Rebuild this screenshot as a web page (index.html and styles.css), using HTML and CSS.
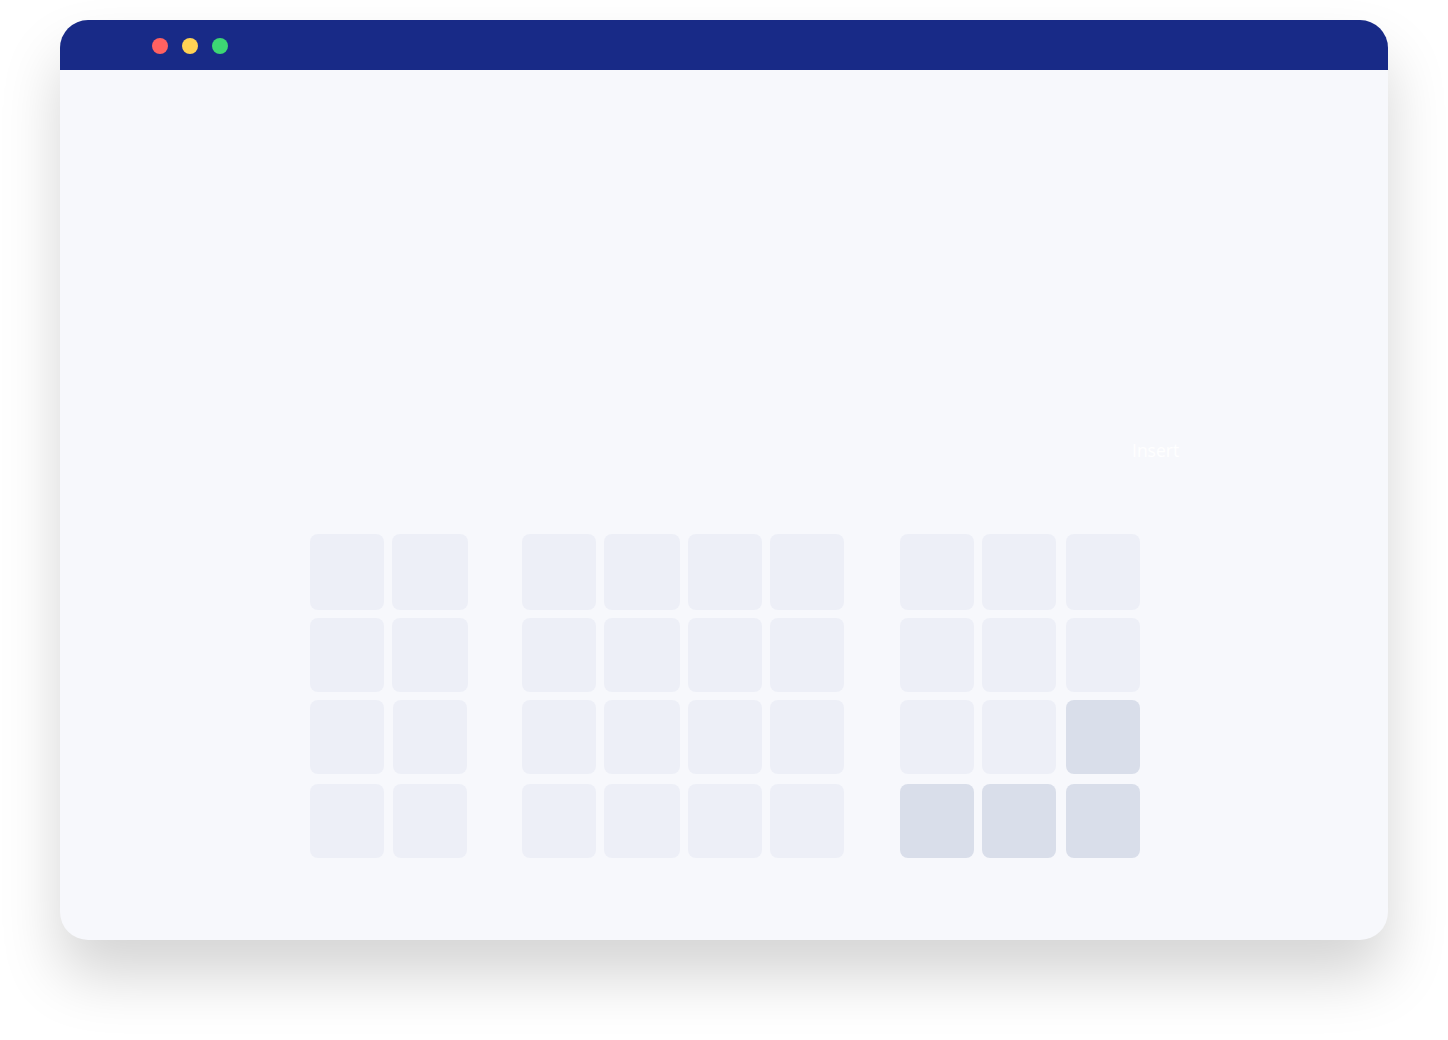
FILE: index.html
```html
<!DOCTYPE html>
<html>
<head>
<meta charset="utf-8">
<link rel="stylesheet" href="styles.css">
</head>
<body>
<div class="window">
  <div class="titlebar">
    <span class="dot red"></span>
    <span class="dot yellow"></span>
    <span class="dot green"></span>
  </div>
  <div class="content">
    <div class="label">Insert</div>
    <div class="keyboard">
      <div class="group g1">
        <div class="row r1"><div class="key w74"></div><div class="key w76"></div></div>
        <div class="row"><div class="key w74"></div><div class="key w76"></div></div>
        <div class="row"><div class="key w74"></div><div class="key w74 off1"></div></div>
        <div class="row"><div class="key w74"></div><div class="key w74 off1"></div></div>
      </div>
      <div class="group g2">
        <div class="row r1"><div class="key w74"></div><div class="key w76"></div><div class="key w74"></div><div class="key w74"></div></div>
        <div class="row"><div class="key w74"></div><div class="key w76"></div><div class="key w74"></div><div class="key w74"></div></div>
        <div class="row"><div class="key w74"></div><div class="key w76"></div><div class="key w74"></div><div class="key w74"></div></div>
        <div class="row"><div class="key w74"></div><div class="key w76"></div><div class="key w74"></div><div class="key w74"></div></div>
      </div>
      <div class="group g3">
        <div class="row r1"><div class="key w74"></div><div class="key w74"></div><div class="key w74 gap10"></div></div>
        <div class="row"><div class="key w74"></div><div class="key w74"></div><div class="key w74 gap10"></div></div>
        <div class="row"><div class="key w74"></div><div class="key w74"></div><div class="key w74 gap10 dark"></div></div>
        <div class="row"><div class="key w74 dark"></div><div class="key w74 dark"></div><div class="key w74 gap10 dark"></div></div>
      </div>
    </div>
  </div>
</div>
</body>
</html>
```

FILE: styles.css
```css
html, body {
  margin: 0;
  padding: 0;
  background: #ffffff;
}
body {
  padding: 20px 60px 100px 60px;
  font-family: "Open Sans", "Liberation Sans", sans-serif;
}
.window {
  width: 1328px;
  height: 920px;
  border-radius: 28px;
  overflow: hidden;
  background: #f7f8fc;
  box-shadow: 0 36px 60px rgba(0, 0, 0, 0.17);
}
.titlebar {
  height: 50px;
  box-sizing: border-box;
  padding-top: 2px;
  background: #182a87;
  display: flex;
  align-items: center;
  padding-left: 92px;
  gap: 14px;
}
.dot {
  width: 16px;
  height: 16px;
  border-radius: 50%;
  display: block;
}
.red { background: #ff6161; }
.yellow { background: #ffd254; }
.green { background: #3dd674; }
.content {
  padding-top: 367px;
}
.label {
  margin-left: 1072px;
  color: #ffffff;
  font-size: 17.5px;
  line-height: 26px;
  height: 26px;
}
.keyboard {
  margin-top: 71px;
  margin-left: 250px;
  display: flex;
}
.group {
  display: flex;
  flex-direction: column;
}
.g2 { margin-left: 54px; }
.g3 { margin-left: 56px; }
.row {
  display: flex;
  gap: 8px;
  height: 74px;
  margin-top: 8px;
}
.row:nth-child(4) { margin-top: 10px; }
.row.r1 {
  height: 76px;
  margin-top: 0;
}
.key {
  background: #edeff7;
  border-radius: 8px;
}
.w74 { width: 74px; }
.w76 { width: 76px; }
.off1 { margin-left: 1px; margin-right: 1px; }
.gap10 { margin-left: 2px; }
.dark { background: #d9deea; }
```
